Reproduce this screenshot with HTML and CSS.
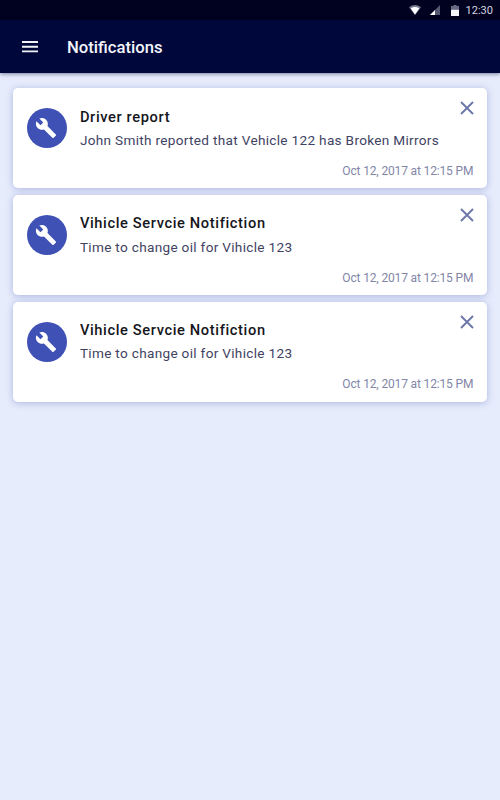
FILE: index.html
```html
<!DOCTYPE html>
<html lang="en">
<head>
<meta charset="utf-8">
<title>Notifications</title>
<link rel="stylesheet" href="styles.css">
</head>
<body>
<svg width="0" height="0" class="defs">
  <symbol id="wrench" viewBox="0 0 24 24"><path d="M22.7 19l-9.1-9.1c.9-2.3.4-5-1.5-6.9-2-2-5-2.4-7.4-1.3L9 6 6 9 1.6 4.7C.4 7.1.9 10.1 2.9 12.1c1.9 1.9 4.6 2.4 6.9 1.5l9.1 9.1c.4.4 1 .4 1.4 0l2.3-2.3c.5-.4.5-1.1.1-1.4z" fill="#fff"/></symbol>
  <symbol id="close" viewBox="0 0 14 14"><path d="M1 1l12 12M13 1L1 13" stroke="#6c77a9" stroke-width="1.9" fill="none"/></symbol>
</svg>
<div class="status">
  <svg class="wifi" width="12" height="10" viewBox="0 0 12 10"><path d="M0 2.2Q6-2 12 2.2L6 10z" fill="#777a92"/><path d="M1.8 3.4Q6 .8 10.2 3.4L6 9.5z" fill="#fff"/></svg>
  <svg class="signal" width="10" height="10" viewBox="0 0 10 10"><path d="M10 0v10H0z" fill="#55586f"/><path d="M5 5v5H0z" fill="#fff"/></svg>
  <svg class="battery" width="8" height="11" viewBox="0 0 8 11"><path d="M2.5 0h3v1H8v4H0V1h2.5z" fill="#666980"/><path d="M0 4.8h8V11H0z" fill="#f4f4fa"/></svg>
  <span>12:30</span>
</div>
<header class="bar">
  <svg width="16" height="12" viewBox="0 0 16 12"><path d="M0 1h16M0 5.7h16M0 10.4h16" stroke="#f2f3f5" stroke-width="1.9"/></svg>
  <h1>Notifications</h1>
</header>
<main class="list">
  <article class="card">
    <div class="icon"><svg width="22" height="22"><use href="#wrench"/></svg></div>
    <div class="body"><h2>Driver report</h2><p>John Smith reported that Vehicle 122 has Broken Mirrors</p><time>Oct 12, 2017 at 12:15 PM</time></div>
    <svg class="close" width="14" height="14"><use href="#close"/></svg>
  </article>
  <article class="card">
    <div class="icon"><svg width="22" height="22"><use href="#wrench"/></svg></div>
    <div class="body"><h2>Vihicle Servcie Notifiction</h2><p>Time to change oil for Vihicle 123</p><time>Oct 12, 2017 at 12:15 PM</time></div>
    <svg class="close" width="14" height="14"><use href="#close"/></svg>
  </article>
  <article class="card">
    <div class="icon"><svg width="22" height="22"><use href="#wrench"/></svg></div>
    <div class="body"><h2>Vihicle Servcie Notifiction</h2><p>Time to change oil for Vihicle 123</p><time>Oct 12, 2017 at 12:15 PM</time></div>
    <svg class="close" width="14" height="14"><use href="#close"/></svg>
  </article>
</main>
</body>
</html>
```
FILE: styles.css
```css
* { box-sizing: border-box; margin: 0; padding: 0; }
body { background: #e6ecfb; font-family: Roboto, "Liberation Sans", sans-serif; min-height: 800px; }
svg { display: block; flex: none; }
.defs { position: absolute; }
.status { height: 20px; background: #00021f; color: #d5d6e0; display: flex; align-items: center; justify-content: flex-end; padding-right: 7px; font-size: 11px; line-height: 20px; }
.status span { padding-top: 2px; }
.wifi { margin-right: 9px; }
.signal { margin-right: 11px; }
.battery { margin-right: 7px; }
.bar { height: 53px; background: #00083b; display: flex; align-items: center; padding-left: 22px; gap: 29px; box-shadow: 0 1px 4px rgba(10, 15, 70, .5); }
.bar h1 { color: #f4f5fb; font-size: 16.67px; font-weight: 500; line-height: 20px; padding-top: 2px; }
.list { padding: 15.3px 13.3px; display: flex; flex-direction: column; gap: 6.67px; }
.card { height: 100px; background: #fff; border-radius: 5px; display: flex; padding: 20px 13.3px 0; box-shadow: 0 1px 7px rgba(90, 105, 190, .42); }
.icon { width: 40px; height: 40px; border-radius: 50%; background: #3f51b5; display: flex; align-items: center; justify-content: center; flex: none; }
.icon svg { margin-right: 1px; }
.body { flex: 1; display: flex; flex-direction: column; padding-left: 13.3px; white-space: nowrap; min-width: 0; margin-top: -.6px; }
.body h2 { font-size: 14.67px; font-weight: 500; letter-spacing: .62px; line-height: 18px; color: #15161c; }
.body p { font-size: 13.6px; letter-spacing: .31px; line-height: 18px; color: #3f4363; margin-top: 5.3px; }
.body time { font-size: 12px; letter-spacing: -.15px; line-height: 16px; color: #8286a8; align-self: flex-end; margin-top: 14px; margin-right: -13.5px; }
.close { margin-top: -7px; margin-right: -.4px; }
```
